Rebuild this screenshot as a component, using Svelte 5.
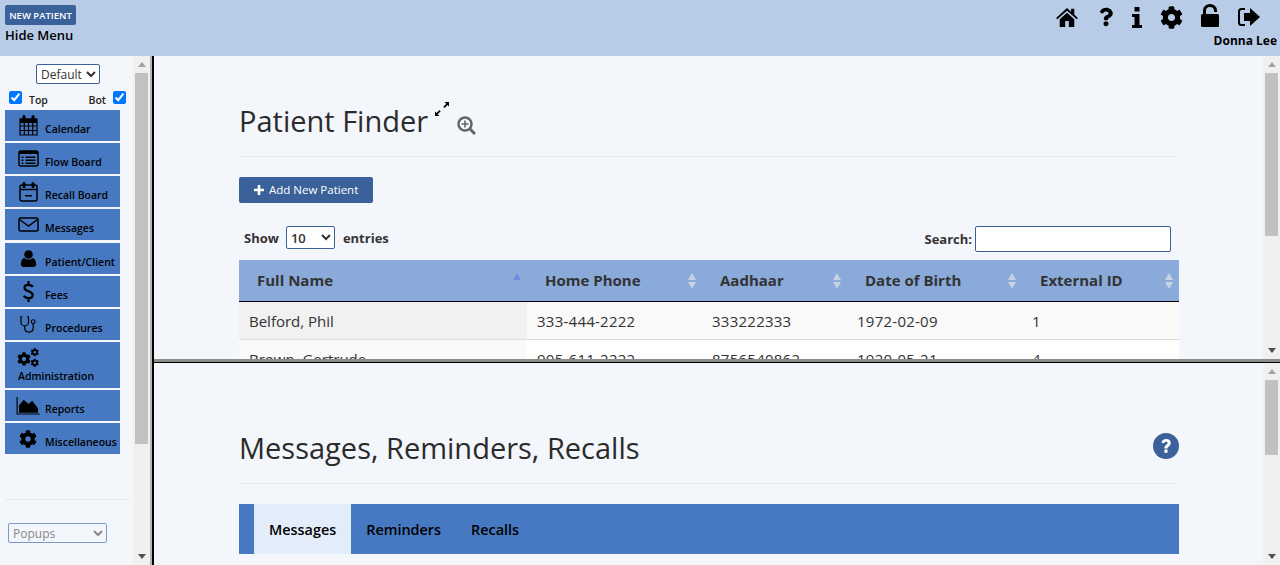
<script>
	const cog = 'M487.4 315.7l-42.6-24.6c4.3-23.2 4.3-47 0-70.2l42.6-24.6c4.9-2.8 7.1-8.6 5.5-14-11.1-35.6-30-67.8-54.7-94.6-3.8-4.1-10-5.1-14.8-2.3L380.8 110c-17.9-15.4-38.5-27.3-60.8-35.1V25.8c0-5.6-3.9-10.5-9.4-11.7-36.7-8.2-74.3-7.8-109.2 0-5.5 1.2-9.4 6.1-9.4 11.7V75c-22.2 7.9-42.8 19.8-60.8 35.1L88.7 85.5c-4.9-2.8-11-1.9-14.8 2.3-24.7 26.7-43.6 58.9-54.7 94.6-1.7 5.4.6 11.2 5.5 14L67.3 221c-4.3 23.2-4.3 47 0 70.2l-42.6 24.6c-4.9 2.8-7.1 8.6-5.5 14 11.1 35.6 30 67.8 54.7 94.6 3.8 4.1 10 5.1 14.8 2.3l42.6-24.6c17.9 15.4 38.5 27.3 60.8 35.1v49.2c0 5.6 3.9 10.5 9.4 11.7 36.7 8.2 74.3 7.8 109.2 0 5.5-1.2 9.4-6.1 9.4-11.7v-49.2c22.2-7.9 42.8-19.8 60.8-35.1l42.6 24.6c4.9 2.8 11 1.9 14.8-2.3 24.7-26.7 43.6-58.9 54.7-94.6 1.5-5.5-.7-11.3-5.6-14.1zM256 336c-44.1 0-80-35.9-80-80s35.9-80 80-80 80 35.9 80 80-35.9 80-80 80z';

	const menu = [
		{ name: 'Calendar', icon: 'calendar' },
		{ name: 'Flow Board', icon: 'flow' },
		{ name: 'Recall Board', icon: 'recall' },
		{ name: 'Messages', icon: 'mail' },
		{ name: 'Patient/Client', icon: 'user', extra: true },
		{ name: 'Fees', icon: 'dollar' },
		{ name: 'Procedures', icon: 'steth' },
		{ name: 'Administration', icon: 'cogs', tall: true },
		{ name: 'Reports', icon: 'chart' },
		{ name: 'Miscellaneous', icon: 'cog' }
	];

	const columns = [
		{ label: 'Full Name', width: 288, sort: 'asc' },
		{ label: 'Home Phone', width: 175 },
		{ label: 'Aadhaar', width: 145 },
		{ label: 'Date of Birth', width: 175 },
		{ label: 'External ID', width: 157 }
	];

	const patients = [
		['Belford, Phil', '333-444-2222', '333222333', '1972-02-09', '1'],
		['Brown, Gertrude', '905-611-2222', '8756540862', '1920-05-21', '4']
	];
</script>

<div class="page">
	<header class="top">
		<div class="top-left">
			<button class="new-patient">NEW PATIENT</button>
			<div class="hide-menu">Hide Menu</div>
		</div>
		<div class="top-right">
			<div class="tools">
				<svg class="home" width="24" height="20" viewBox="0 0 26 22"><path d="M13 1 1 12l1.300 1.500L13 4l10.700 9.500L25 12l-4-3.700V2h-3.500v3.100zM5 13.500V22h6v-6.500h4V22h6v-8.500L13 6.300z" /></svg>
				<svg class="ask" width="14" height="20" viewBox="0 0 384 512"><path d="M202.021 0C122.202 0 70.503 32.703 29.914 91.026c-7.363 10.58-5.093 25.086 5.178 32.874l43.138 32.709c10.373 7.865 25.132 6.026 33.253-4.148 25.049-31.381 43.63-49.449 82.757-49.449 30.764 0 68.816 19.799 68.816 49.631 0 22.552-18.617 34.134-48.993 51.164-35.423 19.86-82.299 44.576-82.299 106.405V320c0 13.255 10.745 24 24 24h72.471c13.255 0 24-10.745 24-24v-5.773c0-42.86 125.268-44.645 125.268-160.627C377.504 66.256 286.902 0 202.021 0zM192 373.459c-38.196 0-69.271 31.075-69.271 69.271 0 38.195 31.075 69.27 69.271 69.27s69.271-31.075 69.271-69.271-31.075-69.27-69.271-69.27z" /></svg>
				<svg width="10" height="21" viewBox="0 0 10 21"><path d="M2.500 0h5v4.500h-5zM0 7h7.500v11H10v3H0v-3h2.500v-8H0z" /></svg>
				<svg width="23" height="23" viewBox="0 0 512 512"><path d={cog} /></svg>
				<svg class="unlock" width="18" height="23" viewBox="0 0 18 23"><path d="M3.500 11V6.500a5.500 5 0 0 1 11 0V8" fill="none" stroke="#000" stroke-width="3" /><rect x="0" y="10" width="18" height="13" rx="1.500" /></svg>
				<svg width="24" height="20" viewBox="0 0 24 20"><path d="M8 2H4.500A2.500 2.500 0 0 0 2 4.500v11A2.500 2.500 0 0 0 4.500 18H8" fill="none" stroke="#000" stroke-width="2" /><path d="M13 1l10 9-10 9v-5H7V6h6z" /></svg>
			</div>
			<div class="user-name">Donna Lee</div>
		</div>
	</header>

	<div class="body">
		<aside class="side">
			<div class="side-main">
				<div class="side-select">
					<select class="theme"><option>Default</option></select>
				</div>
				<div class="checks">
					<label><input type="checkbox" checked /> <span>Top</span></label>
					<label><span>Bot</span> <input type="checkbox" checked /></label>
				</div>
				<nav class="menu">
					{#each menu as item}
						<div class="item" class:tall={item.tall} class:extra={item.extra}>
							<span class="icon">
								{#if item.icon === 'calendar'}
									<svg width="19" height="21" viewBox="0 0 19 21"><path d="M1 4h17v16H1z M1 11h17 M1 15.500h17 M5.300 8v12 M9.500 8v12 M13.700 8v12" fill="none" stroke="#000" stroke-width="1.200" /><path d="M1 3.500h17V8H1z" /><rect x="3.500" y="0" width="3" height="6" rx="1.500" /><rect x="12.500" y="0" width="3" height="6" rx="1.500" /></svg>
								{:else if item.icon === 'flow'}
									<svg width="21" height="17" viewBox="0 0 21 17"><rect x="1" y="1" width="19" height="15" rx="2" fill="none" stroke="#000" stroke-width="1.500" /><path d="M1 1h19v3H1z" /><path d="M3.500 6.500h2V8h-2zM7.500 6.500h10V8h-10zM3.500 9.500h2V11h-2zM7.500 9.500h10V11h-10zM3.500 12.500h2V14h-2zM7.500 12.500h10V14h-10z" /></svg>
								{:else if item.icon === 'recall'}
									<svg width="19" height="20" viewBox="0 0 19 20"><rect x="1" y="3" width="17" height="16" rx="2" fill="none" stroke="#000" stroke-width="1.500" /><path d="M1 7.500h17" stroke="#000" stroke-width="1.500" /><rect x="3.500" y="0" width="3" height="6" rx="1.500" /><rect x="12.500" y="0" width="3" height="6" rx="1.500" /><path d="M6 13h7v1.500H6z" /></svg>
								{:else if item.icon === 'mail'}
									<svg width="21" height="15" viewBox="0 0 21 15"><rect x="1" y="1" width="19" height="13" rx="1.500" fill="none" stroke="#000" stroke-width="1.500" /><path d="M1.500 2.500l9 6.500 9-6.500" fill="none" stroke="#000" stroke-width="1.500" /></svg>
								{:else if item.icon === 'user'}
									<svg width="17" height="17" viewBox="0 0 17 19"><circle cx="8.500" cy="5" r="4.800" /><path d="M0 16c0-4.500 2-6.500 4-7 1.300 1.200 2.800 1.800 4.500 1.800S11.700 10.200 13 9c2 .5 4 2.500 4 7 0 2-1.300 3-3 3H3c-1.700 0-3-1-3-3z" /></svg>
								{:else if item.icon === 'dollar'}
									<svg width="11" height="21" viewBox="0 0 11 21"><path d="M9.800 6C9 4.500 7.500 3.800 5.500 3.800 3 3.800 1.500 5 1.500 6.800c0 4.500 8.200 2.500 8.200 7.200 0 2-1.700 3.100-4.300 3.100-2 0-3.600-.8-4.600-2.300M5.500 0v4M5.500 17v4" fill="none" stroke="#000" stroke-width="2.200" /></svg>
								{:else if item.icon === 'steth'}
									<svg width="17" height="17" viewBox="0 0 18 18"><path d="M2.500 1H1v5.500C1 9 3 10.500 5 10.500S9 9 9 6.500V1H7.500M5 10.500v2C5 15 6.800 17 9.500 17S14 15 14 12.500V8" fill="none" stroke="#000" stroke-width="1.300" /><circle cx="14" cy="6" r="2" fill="none" stroke="#000" stroke-width="1.200" /></svg>
								{:else if item.icon === 'cogs'}
									<svg width="22" height="19" viewBox="0 0 22 19"><svg x="0" y="4" width="14" height="14" viewBox="0 0 512 512"><path d={cog} /></svg><svg x="13.500" y="0" width="8.500" height="8.500" viewBox="0 0 512 512"><path d={cog} /></svg><svg x="13.500" y="10.500" width="8.500" height="8.500" viewBox="0 0 512 512"><path d={cog} /></svg></svg>
								{:else if item.icon === 'chart'}
									<svg width="24" height="18" viewBox="0 0 25 19"><path d="M1 0v18h24" fill="none" stroke="#000" stroke-width="1.200" /><path d="M3 16.500V9l5-6 5 4.500L17 4l6 8v4.500z" /></svg>
								{:else}
									<svg width="18" height="18" viewBox="0 0 512 512"><path d={cog} /></svg>
								{/if}
							</span>
							<span class="label">{item.name}</span>
						</div>
					{/each}
				</nav>
				<div class="side-foot">
					<select class="popups"><option>Popups</option></select>
				</div>
			</div>
			<div class="scrollbar">
				<i class="up"></i>
				<div class="track"><div class="thumb"></div></div>
				<i class="down"></i>
			</div>
		</aside>
		<div class="rule"></div>

		<main class="panes">
			<section class="pane upper">
				<div class="pane-main">
					<div class="title-row">
						<h1>Patient Finder</h1>
						<svg class="expand" width="14" height="14" viewBox="0 0 14 14"><path d="M9.500 0H14v4.500l-1.500-1.500-3 3-1.200-1.200 3-3zM0 14V9.500L1.500 11l3-3 1.200 1.200-3 3L4.500 14z" /></svg>
						<svg class="zoom" width="19" height="19" viewBox="0 0 19 19"><circle cx="8" cy="8" r="6.500" fill="none" stroke="#666" stroke-width="2.500" /><path d="M12.800 12.800 18 18" stroke="#666" stroke-width="3" /><path d="M4.500 7.200h2.700V4.500h1.600v2.700h2.700v1.600H8.800v2.700H7.200V8.800H4.500z" fill="#666" /></svg>
					</div>
					<button class="add">
						<svg width="10" height="10" viewBox="0 0 10 10"><path d="M3.700 0h2.600v3.700H10v2.600H6.300V10H3.700V6.300H0V3.700h3.700z" fill="#fff" /></svg>
						<span>Add New Patient</span>
					</button>
					<div class="controls">
						<div class="length">
							<span>Show</span>
							<select><option>10</option></select>
							<span>entries</span>
						</div>
						<div class="search">Search: <input type="text" /></div>
					</div>
					<table>
						<colgroup>
							{#each columns as col}
								<col style="width: {col.width}px" />
							{/each}
						</colgroup>
						<thead>
							<tr>
								{#each columns as col}
									<th class:asc={col.sort === 'asc'}>{col.label}</th>
								{/each}
							</tr>
						</thead>
						<tbody>
							{#each patients as row}
								<tr>
									{#each row as cell}
										<td>{cell}</td>
									{/each}
								</tr>
							{/each}
						</tbody>
					</table>
				</div>
				<div class="scrollbar">
					<i class="up"></i>
					<div class="track"><div class="thumb upper-thumb"></div></div>
					<i class="down"></i>
				</div>
			</section>

			<div class="divider"></div>

			<section class="pane lower">
				<div class="pane-main">
					<div class="title-row second">
						<h1>Messages, Reminders, Recalls</h1>
						<svg class="help" width="26" height="26" viewBox="0 0 26 26"><circle cx="13" cy="13" r="13" fill="#3a6199" /><path d="M8.500 9.500C9.300 6.900 11 6 13.200 6c2.700 0 4.600 1.600 4.600 3.900 0 3.100-3.300 3.400-3.300 5.500h-3.100c0-3.400 3.200-3.700 3.200-5.300 0-.9-.7-1.400-1.600-1.400-1 0-1.600.6-2.100 1.800zM11.400 16.600h3.100v3.100h-3.100z" fill="#fff" /></svg>
					</div>
					<div class="tabs">
						<span class="tab active">Messages</span>
						<span class="tab">Reminders</span>
						<span class="tab">Recalls</span>
					</div>
				</div>
				<div class="scrollbar">
					<i class="up"></i>
					<div class="track"><div class="thumb lower-thumb"></div></div>
					<i class="down"></i>
				</div>
			</section>
		</main>
	</div>
</div>

<style>
	:global(body) {
		margin: 0;
		background: #f3f6fb;
		font-family: "Open Sans", "Noto Sans", sans-serif;
		overflow: hidden;
	}
	.page {
		height: 565px;
		display: flex;
		flex-direction: column;
		overflow: hidden;
	}
	.top {
		height: 56px;
		flex: none;
		background: #b8cce8;
		display: flex;
		justify-content: space-between;
	}
	.top-left {
		padding: 5px 0 0 5px;
	}
	.new-patient {
		display: block;
		width: 71px;
		height: 20px;
		padding: 0;
		border: 0;
		border-radius: 2px;
		background: #3a6199;
		color: #fff;
		font: 600 9.500px "Open Sans", sans-serif;
	}
	.hide-menu {
		margin-top: 2px;
		font-size: 13px;
		font-weight: 600;
		line-height: 17px;
		color: #000;
	}
	.top-right {
		display: flex;
		flex-direction: column;
		align-items: flex-end;
		padding: 4px 3px 0 0;
	}
	.tools {
		display: flex;
		align-items: center;
		height: 26px;
		gap: 18px;
		margin-right: 16px;
	}
	.home {
		margin-right: 2px;
	}
	.ask {
		margin-right: 1px;
	}
	.unlock {
		margin-top: -3px;
	}
	.user-name {
		margin-top: 3px;
		font-size: 12px;
		font-weight: 700;
		line-height: 16px;
		color: #000;
	}

	.body {
		flex: 1;
		display: flex;
		min-height: 0;
	}
	.side {
		width: 150px;
		flex: none;
		display: flex;
	}
	.rule {
		width: 2px;
		flex: none;
		background: #000;
		border-left: 2px solid #b4b4b4;
	}
	.side-main {
		width: 133px;
		padding-top: 8px;
		box-sizing: border-box;
		display: flex;
		flex-direction: column;
	}
	.side-select {
		display: flex;
		justify-content: center;
		padding-left: 3px;
		height: 21px;
	}
	.theme {
		width: 64px;
		height: 20px;
		font: 12px "Open Sans", sans-serif;
		color: #333;
		background: #fff;
		border: 1px solid #3a6199;
		border-radius: 2px;
	}
	.checks {
		display: flex;
		justify-content: space-between;
		height: 25px;
		padding: 5px 7px 0 9px;
		box-sizing: border-box;
		font-size: 10.500px;
		font-weight: 600;
		color: #222;
	}
	.checks label {
		display: flex;
		gap: 7px;
		line-height: 20px;
	}
	.checks input {
		margin: 1px 0 0;
		width: 13px;
		height: 13px;
	}
	.menu {
		display: flex;
		flex-direction: column;
		gap: 2px;
		width: 115px;
		margin-left: 5px;
	}
	.item {
		height: 31px;
		background: #4679c1;
		display: flex;
		align-items: flex-end;
		overflow: hidden;
	}
	.item.extra {
		margin-top: 1px;
	}
	.item.tall {
		height: 46px;
		flex-direction: column;
		align-items: flex-start;
		justify-content: flex-end;
		padding-left: 13px;
		box-sizing: border-box;
	}
	.icon {
		width: 40px;
		height: 31px;
		flex: none;
		display: flex;
		align-items: center;
		justify-content: center;
		padding-left: 6px;
		box-sizing: border-box;
	}
	.tall .icon {
		width: 26px;
		height: 25px;
		align-items: flex-start;
		justify-content: flex-start;
		padding: 6px 0 0;
		margin-left: -1px;
	}
	.label {
		font-size: 10.500px;
		font-weight: 600;
		line-height: 18px;
		padding-bottom: 3px;
		color: #000;
		white-space: nowrap;
	}
	.side-foot {
		margin: 45px 0 0 5px;
		width: 125px;
		border-top: 1px solid #e6e9ee;
		padding: 23px 0 0 3px;
		box-sizing: border-box;
	}
	.popups {
		display: block;
		width: 99px;
		height: 20px;
		font: 12px "Open Sans", sans-serif;
		color: #888;
		background: #f3f6fb;
		border: 1px solid #7d9ac6;
		border-radius: 2px;
	}

	.scrollbar {
		width: 17px;
		flex: none;
		background: #f0f0f0;
		display: flex;
		flex-direction: column;
		align-items: center;
	}
	.scrollbar i {
		flex: none;
		width: 0;
		height: 0;
		margin: 6px 0;
		border-left: 4px solid transparent;
		border-right: 4px solid transparent;
	}
	.up {
		border-bottom: 5px solid #a3a3a3;
	}
	.down {
		border-top: 5px solid #505050;
	}
	.track {
		flex: 1;
		width: 100%;
		min-height: 0;
	}
	.thumb {
		background: #c1c1c1;
		margin: 0 2px;
		height: 371px;
	}
	.upper-thumb {
		height: 163px;
	}
	.lower-thumb {
		height: 75px;
	}

	.panes {
		flex: 1;
		min-width: 0;
		display: flex;
		flex-direction: column;
	}
	.pane {
		display: flex;
		min-height: 0;
		overflow: hidden;
	}
	.pane.upper {
		height: 303px;
		flex: none;
	}
	.divider {
		height: 3px;
		flex: none;
		background: #8c8c8c;
		border-bottom: 1px solid #000;
	}
	.pane.lower {
		flex: 1;
	}
	.pane-main {
		flex: 1;
		min-width: 0;
		padding: 0 84px 0 85px;
		box-sizing: border-box;
	}
	.title-row {
		position: relative;
		height: 100px;
		border-bottom: 1px solid #e8ebef;
		display: flex;
		align-items: flex-start;
	}
	h1 {
		margin: 42px 0 0;
		font-size: 29px;
		font-weight: 400;
		line-height: 46px;
		color: #2b2b2b;
	}
	.expand {
		margin: 46px 0 0 7px;
	}
	.zoom {
		margin: 60px 0 0 8px;
	}
	.add {
		display: flex;
		align-items: center;
		gap: 5px;
		margin-top: 20px;
		width: 134px;
		height: 26px;
		padding: 0 0 0 15px;
		border: 0;
		border-radius: 2px;
		background: #3a6199;
		color: #fff;
		font: 11.500px "Open Sans", sans-serif;
	}
	.add span {
		padding-bottom: 1px;
	}
	.controls {
		display: flex;
		justify-content: space-between;
		align-items: flex-start;
		height: 26px;
		margin-top: 23px;
		padding: 0 8px 0 5px;
		font-size: 13px;
		font-weight: 700;
		color: #333;
	}
	.length {
		display: flex;
		align-items: center;
		height: 23px;
	}
	.length select {
		width: 49px;
		height: 23px;
		margin: 0 8px 0 7px;
		font: 600 13px "Open Sans", sans-serif;
		color: #333;
		background: #fff;
		border: 1px solid #3a6199;
		border-radius: 2px;
	}
	.search {
		display: flex;
		align-items: center;
		gap: 3px;
		font-size: 13px;
	}
	.search input {
		width: 196px;
		height: 26px;
		padding: 0;
		box-sizing: border-box;
		background: #fff;
		border: 1px solid #3a6199;
		border-radius: 2px;
	}
	table {
		width: 940px;
		margin-top: 8px;
		table-layout: fixed;
		border-collapse: collapse;
		font-size: 15px;
		color: #333;
	}
	th {
		position: relative;
		height: 41px;
		padding: 0 0 0 18px;
		box-sizing: border-box;
		background: #8aaada;
		border-bottom: 1px solid #000;
		text-align: left;
		font-size: 15px;
		font-weight: 700;
	}
	th::before,
	th::after {
		content: '';
		position: absolute;
		right: 6px;
		width: 0;
		height: 0;
		border-left: 4px solid transparent;
		border-right: 4px solid transparent;
	}
	th::before {
		top: 13px;
		border-bottom: 7px solid #c8d2e2;
	}
	th::after {
		top: 22px;
		border-top: 7px solid #c8d2e2;
	}
	th.asc::before {
		border-bottom-color: #7b88e0;
	}
	th.asc::after {
		display: none;
	}
	td {
		height: 38px;
		padding: 1px 0 0 10px;
		box-sizing: border-box;
		border-bottom: 1px solid #ddd;
		background: #fff;
		letter-spacing: .25px;
		white-space: nowrap;
	}
	td:first-child {
		background: #f9f9f9;
		letter-spacing: 0;
	}
	tbody tr:first-child td {
		background: #f9f9f9;
	}
	tbody tr:first-child td:first-child {
		background: #f1f1f1;
	}

	.second {
		height: 120px;
	}
	.second h1 {
		margin-top: 62px;
	}
	.help {
		position: absolute;
		right: 0;
		top: 70px;
	}
	.tabs {
		display: flex;
		height: 50px;
		margin-top: 20px;
		padding-left: 15px;
		background: #4679c1;
		font-size: 14.400px;
		font-weight: 600;
		line-height: 52px;
		color: #000;
	}
	.tab {
		padding: 0 15px;
	}
	.tab.active {
		background: #e3edf9;
	}
</style>
